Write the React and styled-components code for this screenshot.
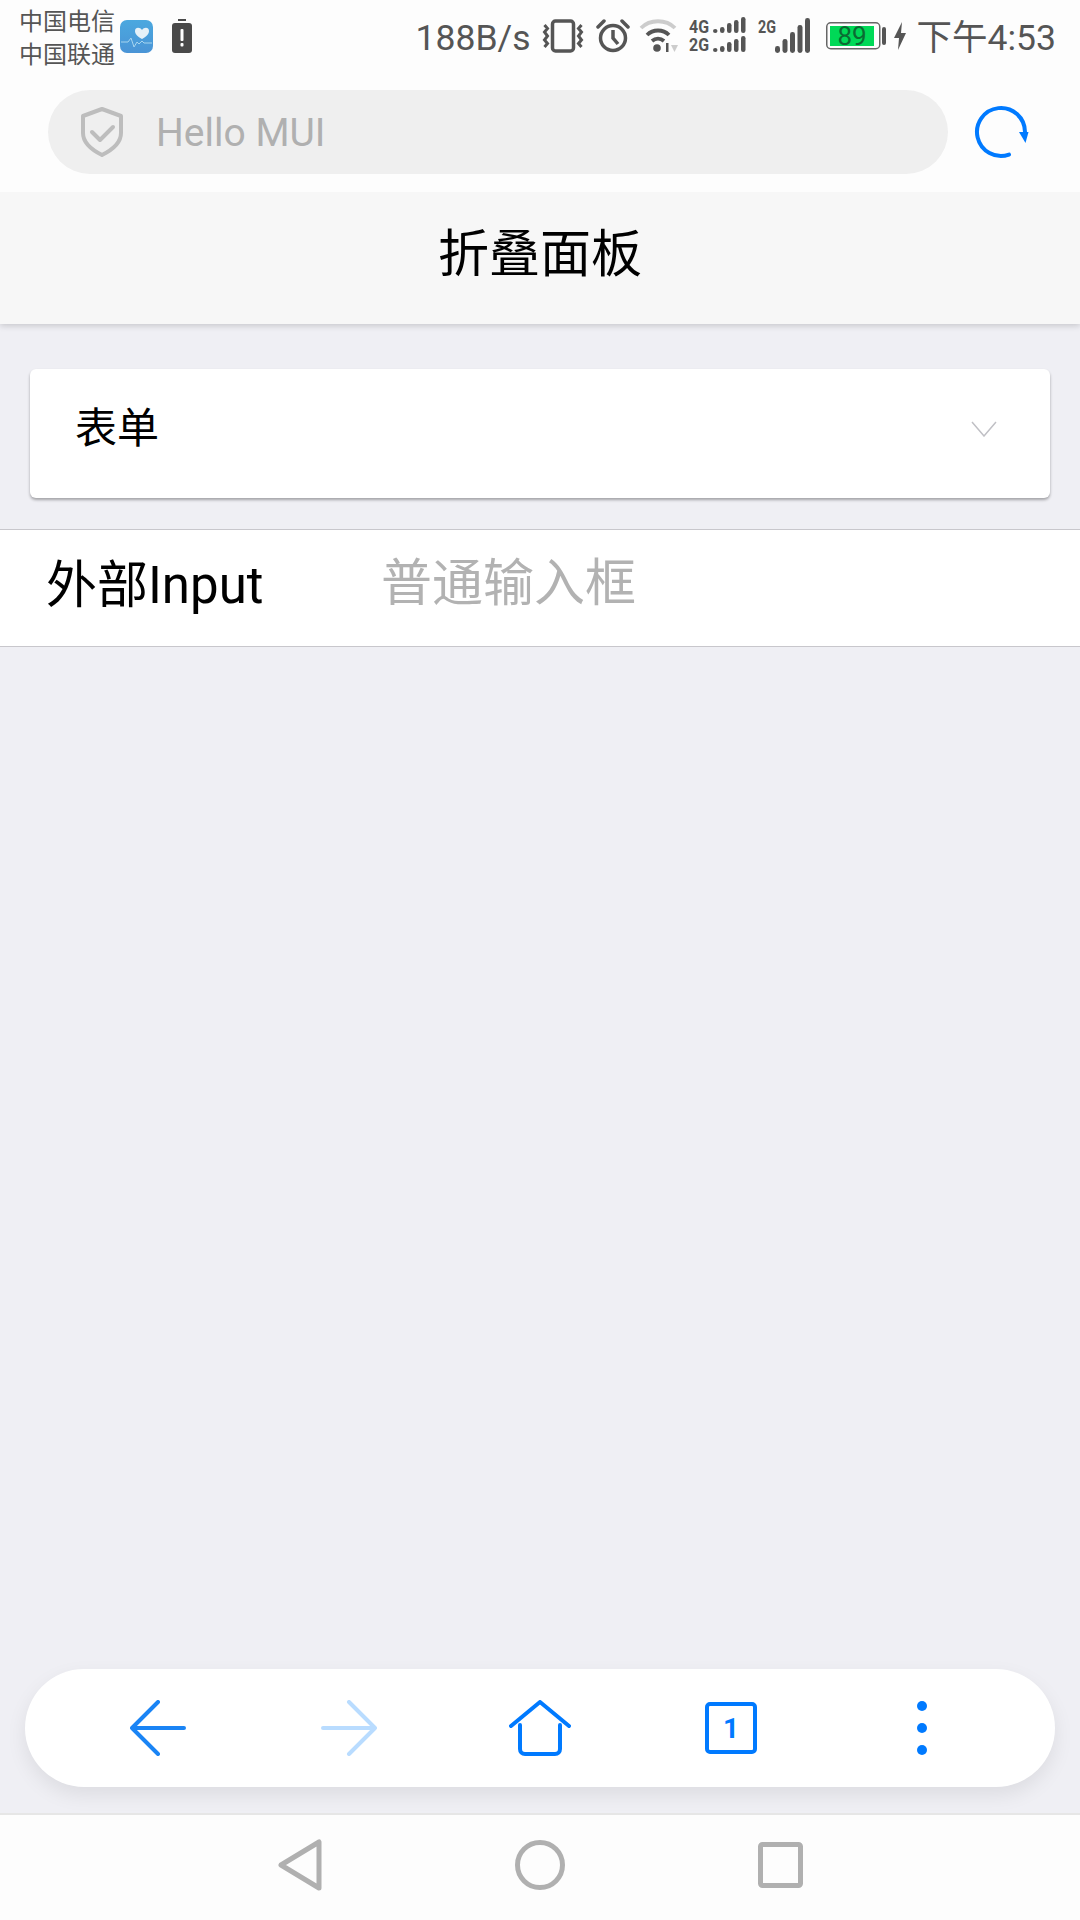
import styled, { createGlobalStyle } from "styled-components";

const GlobalStyle = createGlobalStyle`
  html, body {
    margin: 0;
    padding: 0;
    background: #efeff4;
  }
  * {
    box-sizing: border-box;
  }
`;

const FONT = `Roboto, "Noto Sans CJK SC", sans-serif`;
const BLUE = "#007aff";

const Page = styled.div`
  width: 1080px;
  height: 1920px;
  display: flex;
  flex-direction: column;
  background: #efeff4;
  font-family: ${FONT};
  overflow: hidden;
`;

const Top = styled.div`
  height: 192px;
  background: #fdfdfd;
  display: flex;
  flex-direction: column;
  position: relative;
  z-index: 1;
`;

const StatusBar = styled.div`
  height: 90px;
  display: flex;
  align-items: flex-start;
  justify-content: space-between;
  padding: 0 24px 0 19px;
  color: #555;
`;

const StatusLeft = styled.div`
  display: flex;
  align-items: flex-start;
`;

const Carriers = styled.div`
  width: 101px;
  padding-top: 6px;
  font-size: 24px;
  line-height: 33px;
  white-space: nowrap;
`;

const StatusRight = styled.div`
  display: flex;
  align-items: center;
  height: 72px;
`;

const StatusText = styled.span`
  font-size: 35.5px;
  line-height: 72px;
  padding-top: 3px;
  margin-left: ${(p) => p.$left || 0}px;
  white-space: nowrap;
`;

const StatusIcon = styled.svg`
  display: block;
  flex: none;
  margin-left: ${(p) => p.$left || 0}px;
  margin-top: ${(p) => p.$top || 0}px;
`;

const AddressRow = styled.div`
  display: flex;
  align-items: center;
  padding-left: 48px;
`;

const AddressPill = styled.div`
  width: 900px;
  height: 84px;
  border-radius: 42px;
  background: #efefef;
  display: flex;
  align-items: center;
  padding-left: 32px;
`;

const AddressText = styled.span`
  margin-left: 32px;
  margin-top: 2px;
  font-size: 39px;
  color: #b0b0b0;
`;

const RefreshIcon = styled.svg`
  display: block;
  margin-left: 25px;
`;

const NavBar = styled.header`
  height: 132px;
  background: #f7f7f7;
  display: flex;
  align-items: center;
  justify-content: center;
  font-size: 51px;
  color: #000;
  padding-bottom: 16px;
  box-shadow: 0 2px 6px rgba(0, 0, 0, 0.16);
`;

const Content = styled.main`
  flex: 1;
  padding-top: 45px;
`;

const Card = styled.section`
  height: 129px;
  margin: 0 30px 31px;
  border-radius: 6px;
  background: #fff;
  box-shadow: 0 2px 3px rgba(0, 0, 0, 0.32);
  display: flex;
  justify-content: space-between;
  padding: 38px 53px 0 45px;
`;

const CardTitle = styled.span`
  font-size: 42px;
  line-height: 44px;
  color: #000;
`;

const Chevron = styled.svg`
  display: block;
  margin-top: 14px;
`;

const InputRow = styled.div`
  height: 118px;
  background: #fff;
  border-top: 1px solid #c8c7cc;
  border-bottom: 1px solid #c8c7cc;
  display: flex;
  align-items: center;
`;

const InputLabel = styled.label`
  width: 381px;
  padding-left: 46px;
  font-size: 51px;
  line-height: 60px;
  color: #000;
  margin-top: -4px;
`;

const InputPlaceholder = styled.span`
  font-size: 51px;
  line-height: 60px;
  color: #b2b2b2;
  margin-top: -9px;
`;

const Toolbar = styled.nav`
  height: 118px;
  margin: 0 25px 26px;
  border-radius: 59px;
  background: #fff;
  box-shadow: 0 8px 20px rgba(0, 0, 0, 0.08);
  display: flex;
  align-items: center;
  padding: 0 38px;
`;

const ToolSlot = styled.button`
  flex: 1;
  height: 100%;
  border: 0;
  padding: 0;
  background: none;
  display: flex;
  align-items: center;
  justify-content: center;
`;

const ToolIcon = styled.svg`
  display: block;
`;

const SystemBar = styled.footer`
  height: 107px;
  border-top: 2px solid #e6e6e6;
  background: #fdfdfd;
  display: flex;
  align-items: center;
  justify-content: space-between;
  padding: 0 277px 6px 278px;
`;

const VibrateIcon = () => (
  <StatusIcon width="44" height="34" viewBox="0 0 44 34" $left={10} fill="none" stroke="#555">
    <rect x="11.500" y="2" width="21" height="30" rx="3" strokeWidth="3.500" />
    <path d="M3.500 6l3 3.500-3 3.500 3 4-3 4 3 3.500-3 3.500M40.500 6l-3 3.500 3 3.500-3 4 3 4-3 3.500 3 3.500" strokeWidth="3" />
  </StatusIcon>
);

const AlarmIcon = () => (
  <StatusIcon width="34" height="34" viewBox="0 0 34 34" $left={11} fill="none" stroke="#555" strokeWidth="3.500">
    <circle cx="17" cy="19" r="12.500" />
    <path d="M17 11v8l5 6" />
    <path d="M2 8l6-6M32 8l-6-6" strokeLinecap="round" />
  </StatusIcon>
);

const WifiIcon = () => (
  <StatusIcon width="40" height="34" viewBox="0 0 40 34" $left={9} fill="none" strokeWidth="3.800">
    <path d="M2 9C11 0 27 0 36 9" stroke="#ccc" />
    <path d="M8 16c6-6 16-6 22 0M13 22c3.500-3 8.500-3 12 0" stroke="#555" />
    <circle cx="18" cy="29" r="3.800" fill="#555" stroke="none" />
    <path d="M27 24h2.500v9H27z" fill="#555" stroke="none" />
    <path d="M32 26h7l-3.500 7z" fill="#ccc" stroke="none" />
  </StatusIcon>
);

// one row of signal bars, heights rising left to right
const Bars = ({ x, bottom }) =>
  [4, 6, 10, 13, 16].map((h, i) => (
    <rect key={i} x={x + i * 7} y={bottom - h} width="4.500" height={h} rx="2.200" fill="#555" />
  ));

const NetworkLabel = styled.text`
  font-family: Roboto, sans-serif;
  font-size: 19px;
  font-weight: 700;
  fill: #555;
`;

const DualSignalIcon = () => (
  <StatusIcon width="58" height="40" viewBox="0 0 58 40" $left={10}>
    <NetworkLabel x="0" y="17" textLength="20" lengthAdjust="spacingAndGlyphs">4G</NetworkLabel>
    <NetworkLabel x="0" y="35" textLength="20" lengthAdjust="spacingAndGlyphs">2G</NetworkLabel>
    <Bars x={24} bottom={17} />
    <Bars x={24} bottom={36} />
  </StatusIcon>
);

const SingleSignalIcon = () => (
  <StatusIcon width="52" height="40" viewBox="0 0 52 40" $left={11}>
    <NetworkLabel x="0" y="17" textLength="18" lengthAdjust="spacingAndGlyphs">2G</NetworkLabel>
    {[7, 14, 21, 28, 35].map((h, i) => (
      <rect key={i} x={17 + i * 7.500} y={37 - h} width="5" height={h} rx="2.400" fill="#555" />
    ))}
  </StatusIcon>
);

const BatteryIcon = () => (
  <StatusIcon width="60" height="28" viewBox="0 0 60 28" $left={16}>
    <rect x="0.750" y="0.750" width="53" height="26" rx="4" fill="none" stroke="#666" strokeWidth="1.500" />
    <rect x="4" y="4" width="44" height="20" fill="#00d957" />
    <text x="26" y="23" textAnchor="middle" fontFamily="Roboto, sans-serif" fontSize="26" fill="#0b6b32">89</text>
    <rect x="56" y="5" width="4" height="18" rx="2" fill="#555" />
  </StatusIcon>
);

const BoltIcon = () => (
  <StatusIcon width="12" height="28" viewBox="0 0 12 28" $left={8}>
    <path d="M8 0L0 16h5l-1 12 8-17H7z" fill="#555" />
  </StatusIcon>
);

const App = () => {
  return (
    <Page>
      <GlobalStyle />
      <Top>
        <StatusBar>
          <StatusLeft>
            <Carriers>
              中国电信
              <br />
              中国联通
            </Carriers>
            <StatusIcon width="33" height="33" viewBox="0 0 33 33" $top={20}>
              <defs>
                <linearGradient id="healthBg" x1="0" y1="0" x2="0" y2="1">
                  <stop offset="0" stopColor="#4ba8df" />
                  <stop offset="1" stopColor="#4a94d6" />
                </linearGradient>
              </defs>
              <rect width="33" height="33" rx="7" fill="url(#healthBg)" />
              <path d="M22 19c-5-3-7-5-7-8 0-4 5-4 7-1 2-3 7-3 7 1 0 3-2 5-7 8z" fill="#e6f1f8" />
              <path d="M1 22h7l3-4 3 9 3-5 2 2 3-3 2 2h8" fill="none" stroke="#a6d4ef" strokeWidth="1" />
            </StatusIcon>
            <StatusIcon width="20" height="34" viewBox="0 0 20 34" $left={19} $top={19}>
              <rect x="6" y="0" width="8" height="2" fill="#4a4a4a" />
              <rect x="0" y="4" width="20" height="30" rx="3" fill="#4a4a4a" />
              <rect x="8.500" y="10" width="3" height="12" rx="1" fill="#fff" />
              <rect x="8.500" y="24" width="3" height="3.500" rx="1" fill="#fff" />
            </StatusIcon>
          </StatusLeft>
          <StatusRight>
            <StatusText>188B/s</StatusText>
            <VibrateIcon />
            <AlarmIcon />
            <WifiIcon />
            <DualSignalIcon />
            <SingleSignalIcon />
            <BatteryIcon />
            <BoltIcon />
            <StatusText $left={11}>下午4:53</StatusText>
          </StatusRight>
        </StatusBar>
        <AddressRow>
          <AddressPill>
            <svg width="44" height="50" viewBox="0 0 44 50" fill="none" stroke="#bdbdbd" strokeWidth="4">
              <path d="M22 2l19 7v17c0 10-9 17-19 22C12 43 3 36 3 26V9z" strokeLinejoin="round" />
              <path d="M12 25l8 8 13-13" strokeLinecap="round" strokeLinejoin="round" />
            </svg>
            <AddressText>Hello MUI</AddressText>
          </AddressPill>
          <RefreshIcon width="56" height="56" viewBox="0 0 56 56" fill="none">
            <path d="M52 28A24 24 0 1 0 36 50.600" stroke={BLUE} strokeWidth="4" strokeLinecap="round" />
            <path d="M46 28h9.500l-3 11z" fill={BLUE} />
          </RefreshIcon>
        </AddressRow>
      </Top>
      <NavBar>折叠面板</NavBar>
      <Content>
        <Card>
          <CardTitle>表单</CardTitle>
          <Chevron width="26" height="16" viewBox="0 0 26 16" fill="none" stroke="#c0c0c5" strokeWidth="1.500">
            <path d="M1 1l12 14L25 1" />
          </Chevron>
        </Card>
        <InputRow>
          <InputLabel>外部Input</InputLabel>
          <InputPlaceholder>普通输入框</InputPlaceholder>
        </InputRow>
      </Content>
      <Toolbar>
        <ToolSlot>
          <ToolIcon width="56" height="56" viewBox="0 0 56 56" fill="none" stroke="#1a84f5" strokeWidth="4" strokeLinecap="round" strokeLinejoin="round">
            <path d="M28 2L2 28l26 26M2 28h52" />
          </ToolIcon>
        </ToolSlot>
        <ToolSlot>
          <ToolIcon width="56" height="56" viewBox="0 0 56 56" fill="none" stroke="#b9dcff" strokeWidth="4" strokeLinecap="round" strokeLinejoin="round">
            <path d="M28 2l26 26-26 26M54 28H2" />
          </ToolIcon>
        </ToolSlot>
        <ToolSlot>
          <ToolIcon width="62" height="56" viewBox="0 0 62 56" fill="none" stroke={BLUE} strokeWidth="4" strokeLinecap="round" strokeLinejoin="round">
            <path d="M2 26L31 2l29 24" />
            <path d="M11 25v24c0 3 2 5 5 5h30c3 0 5-2 5-5V25" />
          </ToolIcon>
        </ToolSlot>
        <ToolSlot>
          <ToolIcon width="52" height="52" viewBox="0 0 52 52">
            <rect x="2" y="2" width="48" height="48" rx="3" fill="none" stroke={BLUE} strokeWidth="4" />
            <text x="26" y="36" textAnchor="middle" fontFamily="Roboto, sans-serif" fontSize="28" fontWeight="700" fill={BLUE}>1</text>
          </ToolIcon>
        </ToolSlot>
        <ToolSlot>
          <ToolIcon width="12" height="56" viewBox="0 0 12 56" fill={BLUE}>
            <circle cx="6" cy="6" r="5" />
            <circle cx="6" cy="28" r="5" />
            <circle cx="6" cy="50" r="5" />
          </ToolIcon>
        </ToolSlot>
      </Toolbar>
      <SystemBar>
        <svg width="44" height="52" viewBox="0 0 44 52" fill="none" stroke="#b0b0b0" strokeWidth="5" strokeLinejoin="round">
          <path d="M41 3v46L3 26z" />
        </svg>
        <svg width="50" height="50" viewBox="0 0 50 50" fill="none" stroke="#b0b0b0" strokeWidth="5">
          <circle cx="25" cy="25" r="22.500" />
        </svg>
        <svg width="45" height="46" viewBox="0 0 45 46" fill="none" stroke="#b0b0b0" strokeWidth="5">
          <rect x="2.500" y="2.500" width="40" height="41" rx="2" />
        </svg>
      </SystemBar>
    </Page>
  );
};

export default App;
